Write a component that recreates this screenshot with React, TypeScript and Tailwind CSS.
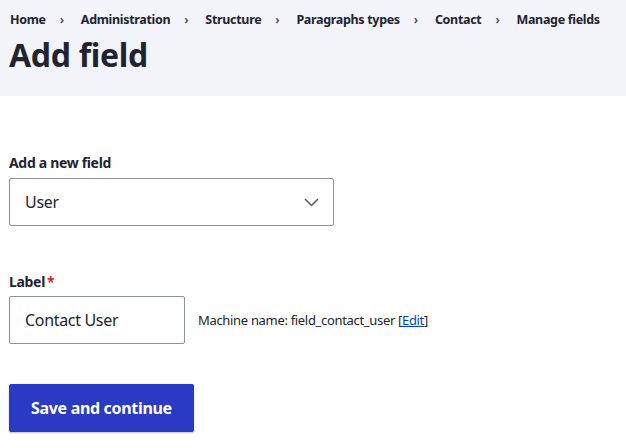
const crumbs = [
  "Home",
  "Administration",
  "Structure",
  "Paragraphs types",
  "Contact",
  "Manage fields",
];

const Chevron = () => (
  <svg width="15" height="9" viewBox="0 0 15 9" fill="none" aria-hidden="true">
    <path d="M1 1l6.5 6.5L14 1" stroke="#545560" strokeWidth="1.5" />
  </svg>
);

const App = () => {
  return (
    <div className="min-h-[448px] bg-white text-[#222330] font-['Noto_Sans',sans-serif] tracking-[-0.02em]">
      <div className="bg-[#f3f4f9] h-[96px] px-[10px] pt-[10px]">
        <nav className="flex items-center h-[20px] text-[12.5px] font-bold leading-[20px] whitespace-nowrap">
          {crumbs.map((c, i) => (
            <span key={c} className="flex items-center">
              {i > 0 && (
                <span className="ml-[14px] mr-[17px] text-[12px] text-[#545560]">›</span>
              )}
              <a className="text-[#222330]">{c}</a>
            </span>
          ))}
        </nav>
        <h1 className="mt-[5px] text-[32px] font-bold leading-[40px] -ml-[1px]">Add field</h1>
      </div>

      <div className="px-[9px] pt-[58px]">
        <label className="block text-[14px] font-bold leading-[18px] mb-[6px]">Add a new field</label>
        <div className="flex items-center justify-between w-[325px] h-[48px] border border-[#8e929c] rounded-[2px] pl-[15px] pr-[14px]">
          <span className="text-[16px]">User</span>
          <Chevron />
        </div>

        <label className="block mt-[47px] text-[14px] font-bold leading-[18px] mb-[5px]">
          Label<span className="ml-[2px] text-[#dc2323]">*</span>
        </label>
        <div className="flex items-center">
          <div className="flex items-center w-[176px] h-[48px] border border-[#8e929c] rounded-[2px] pl-[15px] text-[16px]">
            Contact User
          </div>
          <span className="ml-[13px] mt-[2px] text-[13px] text-[#232429]">
            Machine name: field_contact_user [<a className="text-[#003ecc] underline">Edit</a>]
          </span>
        </div>

        <button
          type="button"
          className="mt-[40px] h-[48px] px-[22px] rounded-[2px] bg-[#2b3ac4] text-white text-[16px] font-bold shadow-[0_1px_2px_rgba(0,0,0,0.25)]"
        >
          Save and continue
        </button>
      </div>
    </div>
  );
};

export default App;
